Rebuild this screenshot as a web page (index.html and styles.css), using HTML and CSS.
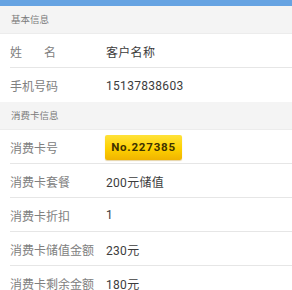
FILE: index.html
```html
<!DOCTYPE html>
<html lang="zh">
<head>
<meta charset="utf-8">
<link rel="stylesheet" href="styles.css">
</head>
<body>
<div class="topbar"></div>
<div class="section-title">基本信息</div>
<div class="group">
  <div class="row"><div class="label label-split"><span>姓</span><span>名</span></div><div class="value">客户名称</div></div>
  <div class="row last"><div class="label">手机号码</div><div class="value num">15137838603</div></div>
</div>
<div class="section-title">消费卡信息</div>
<div class="group">
  <div class="row"><div class="label">消费卡号</div><div class="value"><span class="badge">No.227385</span></div></div>
  <div class="row"><div class="label">消费卡套餐</div><div class="value">200元储值</div></div>
  <div class="row"><div class="label">消费卡折扣</div><div class="value">1</div></div>
  <div class="row"><div class="label">消费卡储值金额</div><div class="value">230元</div></div>
  <div class="row last"><div class="label">消费卡剩余金额</div><div class="value">180元</div></div>
</div>
</body>
</html>
```

FILE: styles.css
```css
html, body {
  margin: 0;
  padding: 0;
  background: #ffffff;
  font-family: "Roboto", "Noto Sans CJK SC", sans-serif;
}
.topbar {
  height: 6px;
  background: #66a3e2;
}
.section-title {
  height: 28px;
  line-height: 28px;
  background: #f4f4f4;
  padding-left: 11px;
  font-size: 9.5px;
  color: #7a7a7a;
  border-bottom: 1px solid #ececec;
  box-sizing: border-box;
}
.row {
  display: flex;
  align-items: center;
  height: 34px;
  margin-left: 10px;
  border-bottom: 1px solid #e6e6e6;
  box-sizing: border-box;
  padding-top: 1px;
}
.row.last {
  border-bottom: none;
}
.label {
  width: 96px;
  font-size: 12px;
  color: #808080;
}
.label-split {
  display: flex;
  justify-content: space-between;
  width: 46px;
  margin-right: 50px;
}
.value {
  font-size: 12px;
  color: #3c3c3c;
  font-weight: 400;
  letter-spacing: 0.3px;
}
.badge {
  display: inline-block;
  width: 77px;
  height: 25px;
  line-height: 25px;
  text-align: center;
  font-weight: 700;
  font-size: 11.5px;
  letter-spacing: 0.8px;
  color: #3e3200;
  background: linear-gradient(180deg, #ffe23a 0%, #fdd000 55%, #f0b400 100%);
  border-radius: 2px;
  box-shadow: 0 1px 1px rgba(180, 130, 0, 0.35);
  margin-left: -1px;
}
```
